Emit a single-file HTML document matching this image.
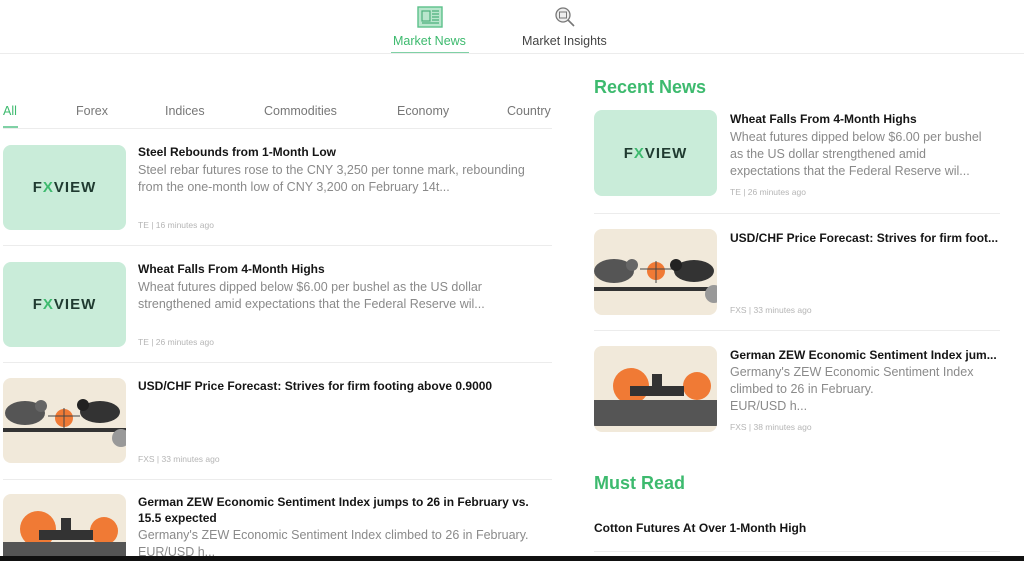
<!DOCTYPE html>
<html style="width:1024px;height:561px;overflow:hidden"><head><meta charset="utf-8"><style>
*{margin:0;padding:0;box-sizing:border-box}
body{width:1024px;height:561px;overflow:hidden;background:#fff;font-family:"Liberation Sans",sans-serif;position:relative;color:#111}
.a{position:absolute}
.t{font-size:12px;font-weight:bold;color:#151515;line-height:16px}
.d{font-size:12.5px;color:#8a8a8a;line-height:17px}
.m{font-size:8.5px;color:#b5b5b5}
.img{position:absolute;width:123px;height:85px;border-radius:8px;overflow:hidden}
.fx{background:#c9ecd9;display:flex;align-items:center;justify-content:center;font-weight:bold;font-size:15px;letter-spacing:1px;color:#1f3a30}
.fx b{color:#3dba6e}
.hr{position:absolute;height:1px;background:#ececec}
.tab{position:absolute;top:104px;font-size:12.5px;color:#777}
h2{position:absolute;font-size:18px;color:#3dba6e;font-weight:bold}
</style></head><body>
<svg class="a" style="left:417px;top:6px" width="26" height="22" viewBox="0 0 26 22"><rect x="1" y="1" width="24" height="20" fill="#b9e6cd" stroke="#5cc08a" stroke-width="1.4"/><rect x="5" y="5" width="8" height="10" fill="none" stroke="#4caf7c" stroke-width="1.2"/><path d="M15 5h7M15 8h7M15 11h7M15 14h7M5 17h17" stroke="#4caf7c" stroke-width="1.2"/></svg>
<svg class="a" style="left:553px;top:5px" width="24" height="24" viewBox="0 0 24 24"><circle cx="10" cy="10" r="7" fill="#eee" stroke="#777" stroke-width="1.3"/><rect x="6.5" y="7" width="7" height="6" fill="none" stroke="#777"/><path d="M15 15l6 6" stroke="#777" stroke-width="1.6"/></svg>
<div class="a" style="left:393px;top:34px;font-size:12.5px;color:#3dba6e">Market News</div>
<div class="a" style="left:522px;top:34px;font-size:12.5px;color:#444">Market Insights</div>
<div class="a" style="left:391px;top:52px;width:78px;height:2px;background:#7fd1a5"></div>
<div class="hr" style="left:0;top:53px;width:1024px"></div>
<div class="tab" style="left:3px;color:#3dba6e">All</div>
<div class="tab" style="left:76px">Forex</div>
<div class="tab" style="left:165px">Indices</div>
<div class="tab" style="left:264px">Commodities</div>
<div class="tab" style="left:397px">Economy</div>
<div class="tab" style="left:507px">Country</div>
<div class="a" style="left:3px;top:126px;width:15px;height:2px;background:#7fd1a5"></div>
<div class="hr" style="left:3px;top:128px;width:549px"></div>

<div class="img fx" style="left:3px;top:145px">F<b>X</b>VIEW</div>
<div class="a t" style="left:138px;top:144px">Steel Rebounds from 1-Month Low</div>
<div class="a d" style="left:138px;top:162px;width:392px">Steel rebar futures rose to the CNY 3,250 per tonne mark, rebounding from the one-month low of CNY 3,200 on February 14t...</div>
<div class="a m" style="left:138px;top:220px">TE | 16 minutes ago</div>
<div class="hr" style="left:3px;top:245px;width:549px"></div>

<div class="img fx" style="left:3px;top:262px">F<b>X</b>VIEW</div>
<div class="a t" style="left:138px;top:261px">Wheat Falls From 4-Month Highs</div>
<div class="a d" style="left:138px;top:279px;width:392px">Wheat futures dipped below $6.00 per bushel as the US dollar strengthened amid expectations that the Federal Reserve wil...</div>
<div class="a m" style="left:138px;top:337px">TE | 26 minutes ago</div>
<div class="hr" style="left:3px;top:362px;width:549px"></div>

<div class="img" style="left:3px;top:378px;background:#f1e9da">
<svg width="123" height="85"><rect x="0" y="50" width="123" height="4" fill="#333"/><ellipse cx="22" cy="35" rx="20" ry="12" fill="#555"/><circle cx="38" cy="28" r="6" fill="#666"/><ellipse cx="97" cy="34" rx="20" ry="11" fill="#333"/><circle cx="80" cy="27" r="6" fill="#222"/><circle cx="61" cy="40" r="9" fill="#f07a35"/><path d="M45 38h32M61 30v20" stroke="#444"/><circle cx="118" cy="60" r="9" fill="#999"/></svg></div>
<div class="a t" style="left:138px;top:378px">USD/CHF Price Forecast: Strives for firm footing above 0.9000</div>
<div class="a m" style="left:138px;top:454px">FXS | 33 minutes ago</div>
<div class="hr" style="left:3px;top:479px;width:549px"></div>

<div class="img" style="left:3px;top:494px;height:62px;border-radius:8px 8px 0 0;background:#f1e9da">
<svg width="123" height="62"><circle cx="35" cy="35" r="18" fill="#f07a35"/><circle cx="101" cy="37" r="14" fill="#f07a35"/><rect x="0" y="48" width="123" height="40" fill="#555"/><rect x="36" y="36" width="54" height="10" fill="#333"/><rect x="58" y="24" width="10" height="12" fill="#333"/></svg></div>
<div class="a t" style="left:138px;top:494px;width:410px">German ZEW Economic Sentiment Index jumps to 26 in February vs. 15.5 expected</div>
<div class="a d" style="left:138px;top:527px;width:410px;height:29px;overflow:hidden">Germany's ZEW Economic Sentiment Index climbed to 26 in February. EUR/USD h...</div>

<h2 style="left:594px;top:77px">Recent News</h2>
<div class="img fx" style="left:594px;top:110px;height:86px">F<b>X</b>VIEW</div>
<div class="a t" style="left:730px;top:111px">Wheat Falls From 4-Month Highs</div>
<div class="a d" style="left:730px;top:129px;width:262px">Wheat futures dipped below $6.00 per bushel as the US dollar strengthened amid expectations that the Federal Reserve wil...</div>
<div class="a m" style="left:730px;top:187px">TE | 26 minutes ago</div>
<div class="hr" style="left:594px;top:213px;width:406px"></div>

<div class="img" style="left:594px;top:229px;height:86px;background:#f1e9da">
<svg width="123" height="86"><rect x="0" y="58" width="123" height="4" fill="#333"/><ellipse cx="20" cy="42" rx="20" ry="12" fill="#555"/><circle cx="38" cy="36" r="6" fill="#666"/><ellipse cx="100" cy="42" rx="20" ry="11" fill="#333"/><circle cx="82" cy="36" r="6" fill="#222"/><circle cx="62" cy="42" r="9" fill="#f07a35"/><path d="M46 40h32M62 32v22" stroke="#444"/><circle cx="120" cy="65" r="9" fill="#999"/></svg></div>
<div class="a t" style="left:730px;top:230px">USD/CHF Price Forecast: Strives for firm foot...</div>
<div class="a m" style="left:730px;top:305px">FXS | 33 minutes ago</div>
<div class="hr" style="left:594px;top:330px;width:406px"></div>

<div class="img" style="left:594px;top:346px;height:86px;background:#f1e9da">
<svg width="123" height="86"><circle cx="37" cy="40" r="18" fill="#f07a35"/><circle cx="103" cy="40" r="14" fill="#f07a35"/><rect x="0" y="54" width="123" height="26" fill="#555"/><rect x="36" y="40" width="54" height="10" fill="#333"/><rect x="58" y="28" width="10" height="12" fill="#333"/></svg></div>
<div class="a t" style="left:730px;top:347px">German ZEW Economic Sentiment Index jum...</div>
<div class="a d" style="left:730px;top:364px;width:262px">Germany's ZEW Economic Sentiment Index climbed to 26 in February.<br>EUR/USD h...</div>
<div class="a m" style="left:730px;top:422px">FXS | 38 minutes ago</div>

<h2 style="left:594px;top:473px">Must Read</h2>
<div class="a t" style="left:594px;top:520px">Cotton Futures At Over 1-Month High</div>
<div class="hr" style="left:594px;top:551px;width:406px"></div>

<div class="a" style="left:0;top:556px;width:1024px;height:5px;background:#111"></div>
</body></html>
